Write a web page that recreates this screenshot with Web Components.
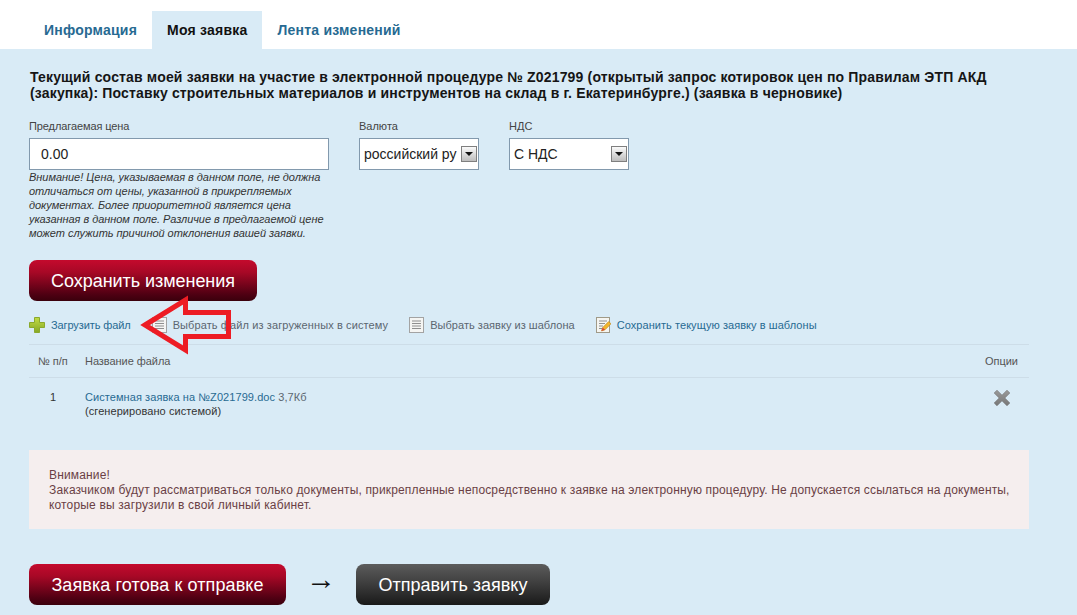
<!DOCTYPE html>
<html lang="ru"><head><meta charset="utf-8"><title>Моя заявка</title>
<style>
html,body{margin:0;padding:0;background:#fff;font-family:"Liberation Sans",Arial,sans-serif;height:615px;overflow:hidden}
</style></head><body>
<x-page>
  <x-tabs slot="tabs">
    <x-tab>Информация</x-tab><x-tab active>Моя заявка</x-tab><x-tab>Лента изменений</x-tab>
  </x-tabs>
  <x-heading>Текущий состав моей заявки на участие в электронной процедуре № Z021799 (открытый запрос котировок цен по Правилам ЭТП АКД<br>(закупка): Поставку строительных материалов и инструментов на склад в г. Екатеринбурге.) (заявка в черновике)</x-heading>
  <x-form>
    <x-field label="Предлагаемая цена" value="0.00">
      Внимание! Цена, указываемая в данном поле, не должна<br>отличаться от цены, указанной в прикрепляемых<br>документах. Более приоритетной является цена<br>указанная в данном поле. Различие в предлагаемой цене<br>может служить причиной отклонения вашей заявки.
    </x-field>
    <x-select label="Валюта" value="российский ру"></x-select>
    <x-select label="НДС" value="С НДС"></x-select>
  </x-form>
  <x-button color="red" style="--w:228px;--mt:20px;--ls:-.05px">Сохранить изменения</x-button>
  <x-toolbar>
    <x-tool icon="plus" link style="--ls:-.1px">Загрузить файл</x-tool>
    <x-tool icon="doc" style="--ls:.11px">Выбрать файл из загруженных в систему</x-tool>
    <x-tool icon="doc" style="--ls:.03px">Выбрать заявку из шаблона</x-tool>
    <x-tool icon="edit" link>Сохранить текущую заявку в шаблоны</x-tool>
  </x-toolbar>
  <x-file-table></x-file-table>
  <x-alert>Внимание!<br>Заказчиком будут рассматриваться только документы, прикрепленные непосредственно к заявке на электронную процедуру. Не допускается ссылаться на документы,<br>которые вы загрузили в свой личный кабинет.</x-alert>
  <x-actions>
    <x-button color="red" style="--w:257px;--ls:.1px">Заявка готова к отправке</x-button>
    <x-arrow-text>→</x-arrow-text>
    <x-button color="dark" style="--w:194px">Отправить заявку</x-button>
  </x-actions>
  <x-red-arrow></x-red-arrow>
</x-page>
<script>
function def(name, css, html){
  customElements.define(name, class extends HTMLElement{
    connectedCallback(){
      if(this.shadowRoot) return;
      const r=this.attachShadow({mode:'open'});
      r.innerHTML='<style>'+css+'</style>'+(typeof html==='function'?html(this):html);
    }
  });
}
def('x-page',`:host{display:block;position:relative;height:615px;overflow:hidden}
  .panel{background:#d9ebf6;padding:20px 48px 0 29px;height:566px;box-sizing:border-box}`,
  `<slot name="tabs"></slot><div class="panel"><slot></slot></div>`);
def('x-tabs',`:host{display:flex;padding:11px 0 0 29px;height:38px}`,`<slot></slot>`);
def('x-tab',`:host{display:block;padding:0 15px;height:38px;font:bold 14px/38px "Liberation Sans",sans-serif;letter-spacing:.22px;color:#276a92}
  :host([active]){background:#d9ebf6;color:#111}`,`<slot></slot>`);
def('x-heading',`:host{display:block;font:bold 14px/16px "Liberation Sans",sans-serif;letter-spacing:.163px;color:#151515;padding-left:1px;white-space:nowrap}`,`<slot></slot>`);
def('x-form',`:host{display:flex;gap:30px;margin-top:19px}`,`<slot></slot>`);
def('x-field',`:host{display:block;width:300px}
  label{display:block;font:11px/12px "Liberation Sans",sans-serif;letter-spacing:-.1px;color:#444;height:18px}
  .in{box-sizing:border-box;height:32px;background:#fff;border:1px solid #8299ad;padding-left:11px;font:14px/30px "Liberation Sans",sans-serif;color:#222}
  .note{font:italic 11px/14px "Liberation Sans",sans-serif;letter-spacing:-.04px;color:#333;white-space:nowrap;height:70px}`,
  h=>`<label>${h.getAttribute('label')}</label><div class="in">${h.getAttribute('value')}</div><div class="note"><slot></slot></div>`);
def('x-select',`:host{display:block;width:120px}
  label{display:block;font:11px/12px "Liberation Sans",sans-serif;color:#444;height:18px}
  .s{box-sizing:border-box;height:32px;background:#fff;border:1px solid #8299ad;display:flex;align-items:center;padding:0 1px 0 4px;font:14px "Liberation Sans",sans-serif;color:#222}
  .t{flex:1;white-space:nowrap}
  .b{flex:none;width:16px;height:16px;box-sizing:border-box;border:1px solid #7f7f7f;background:linear-gradient(#fafafa,#bdbdbd);display:flex;align-items:center;justify-content:center}
  .b i{display:block;width:0;height:0;border:4px solid transparent;border-top-color:#111;border-bottom:0}`,
  h=>`<label>${h.getAttribute('label')}</label><div class="s"><span class="t">${h.getAttribute('value')}</span><span class="b"><i></i></span></div>`);
def('x-button',`:host{display:block;width:var(--w);margin-top:var(--mt,0);flex:none;box-sizing:border-box;height:41px;border-radius:8px;color:#fff;text-align:center;font:18px/43px "Liberation Sans",sans-serif;letter-spacing:var(--ls,0);white-space:nowrap}
  :host([color=red]){background:linear-gradient(#c40a2d 0,#a70826 30%,#4d0012 85%,#3a000c 100%)}
  :host([color=dark]){background:linear-gradient(#5c5c5c 0,#3c3c3c 50%,#191919 100%)}`,`<slot></slot>`);
def('x-toolbar',`:host{display:flex;gap:21px;align-items:center;height:38px;margin-top:5px;border-bottom:1px solid #cddde8}`,`<slot></slot>`);
const ICONS={
 plus:`<svg width="16" height="16" viewBox="0 0 16 16"><defs><linearGradient id="g" x1="0" y1="0" x2="0" y2="1"><stop offset="0" stop-color="#c2dc45"/><stop offset="1" stop-color="#86a826"/></linearGradient></defs><path d="M5.5 .5h5v5h5v5h-5v5h-5v-5h-5v-5h5z" fill="url(#g)" stroke="#8aa92d" stroke-width="1"/></svg>`,
 doc:`<svg width="15" height="16" viewBox="0 0 15 16"><rect x=".5" y=".5" width="14" height="15" fill="#f5f5f3" stroke="#a3a3a3"/><path d="M3 4h9M3 6.5h9M3 9h9M3 11.5h9" stroke="#8f8f8f"/></svg>`,
 edit:`<svg width="15" height="16" viewBox="0 0 15 16"><rect x=".5" y=".5" width="13" height="15" fill="#f5f5f1" stroke="#a09a88"/><path d="M3 4h8M3 6.5h6M3 9h4M3 11.5h3" stroke="#8f8f8f"/><path d="M5.5 14l1.2-3.5 6-6 2.3 2.3-6 6z" fill="#f2b62c" stroke="#b9801a" stroke-width=".6"/><path d="M5.5 14l1.2-3.5 2.3 2.3z" fill="#d8473a"/></svg>`};
def('x-tool',`:host{display:flex;align-items:center;gap:6px;font:11px "Liberation Sans",sans-serif;color:#5b6670;white-space:nowrap;letter-spacing:var(--ls,.06px)}
  :host([link]){color:#276a92} svg{display:block}`,
  h=>ICONS[h.getAttribute('icon')]+`<slot></slot>`);
def('x-file-table',`:host{display:block;font:11px/14px "Liberation Sans",sans-serif;color:#333}
  .h,.r{display:grid;grid-template-columns:47px 1fr 43px;padding:0 1px 0 9px}
  .h{height:32px;align-items:center;color:#555;border-bottom:1px solid #cddde8;letter-spacing:-.05px}
  .r{padding-top:12px;height:60px;box-sizing:border-box;letter-spacing:.07px}
  .n{padding-left:12px}a{color:#276a92;text-decoration:none}.sz{color:#5b6670}
  .o{display:flex;padding-left:8px;margin-top:-1px}`,
  `<div class="h"><span>№ п/п</span><span>Название файла</span><span>Опции</span></div>
   <div class="r"><span class="n">1</span><span><a>Системная заявка на №Z021799.doc</a> <span class="sz">3,7Кб</span><br>(сгенерировано системой)</span>
   <span class="o"><svg width="18" height="18" viewBox="0 0 18 18"><defs><linearGradient id="x" x1="0" y1="0" x2="0" y2="1"><stop offset="0" stop-color="#9a9a9a"/><stop offset="1" stop-color="#777"/></linearGradient></defs><path d="M4 1.2l5 5 5-5 2.8 2.8-5 5 5 5-2.8 2.8-5-5-5 5L1.2 14l5-5-5-5z" fill="url(#x)" stroke="#6d6d6d" stroke-width=".6" stroke-linejoin="round"/></svg></span></div>`);
def('x-alert',`:host{display:block;box-sizing:border-box;height:79px;margin-top:12px;background:#f5eeee;padding:18px 20px 0;font:12px/15px "Liberation Sans",sans-serif;letter-spacing:.155px;color:#6a3f45;white-space:nowrap}`,`<slot></slot>`);
def('x-actions',`:host{display:flex;align-items:flex-start;margin-top:35px}`,`<slot></slot>`);
def('x-arrow-text',`:host{display:block;width:70px;height:41px;text-align:center;font:30px/30px "Liberation Serif",serif;color:#111}`,`<slot></slot>`);
def('x-red-arrow',`:host{position:absolute;left:0;top:0;pointer-events:none}svg{display:block}`,
  `<svg width="300" height="400"><path d="M145 325L185.5 300V312.5H228.5V336.5H185.5V350Z" fill="none" stroke="#ed1c24" stroke-width="5" stroke-linejoin="miter"/></svg>`);
</script></body></html>
